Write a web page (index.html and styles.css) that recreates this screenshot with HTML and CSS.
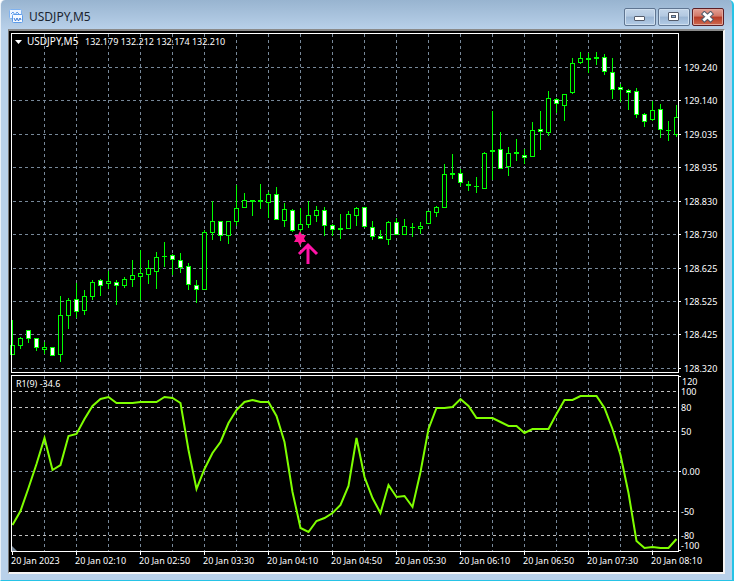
FILE: index.html
```html
<!DOCTYPE html>
<html lang="en">
<head>
  <meta charset="UTF-8">
  <meta name="viewport" content="width=device-width, initial-scale=1.0">
  <title>USDJPY,M5</title>
  <link rel="stylesheet" href="styles.css">
</head>
<body>
  <div class="window">
    <header class="titlebar">
      <svg class="app-icon" width="16" height="16" viewBox="0 0 16 16">
        <rect x="0.5" y="0.5" width="12" height="9" rx="1" fill="#eef5ff" stroke="#7fb2f0"/>
        <path d="M2 5l2-2 2 3 2-3 2 2" stroke="#5b9bea" fill="none"/>
        <rect x="3.5" y="5.5" width="10" height="8" rx="1" fill="#f6faff" stroke="#5b9bea"/>
        <path d="M5 9l1.500 3 1.500-3 1.500 3 1.500-3 1 2" stroke="#3c7bd6" fill="none"/>
      </svg>
      <h1 class="title">USDJPY,M5</h1>
      <div class="controls">
        <button class="control" aria-label="Minimize">
          <svg width="14" height="12" viewBox="0 0 14 12"><rect x="1.500" y="5.500" width="10" height="4" rx="0.500" fill="#fff" stroke="#555c6b"/></svg>
        </button>
        <button class="control" aria-label="Maximize">
          <svg width="14" height="12" viewBox="0 0 14 12">
            <rect x="1.500" y="1.500" width="10" height="8" rx="0.500" fill="#fff" stroke="#555c6b"/>
            <rect x="4.500" y="4.500" width="4" height="2" fill="#8fb4dc" stroke="#555c6b"/>
          </svg>
        </button>
        <button class="control close" aria-label="Close">
          <svg width="14" height="12" viewBox="0 0 14 12">
            <path d="M3.500 3l6 5.500M9.500 3l-6 5.500" stroke="#555c6b" stroke-width="5" stroke-linecap="square"/>
            <path d="M3.500 3l6 5.500M9.500 3l-6 5.500" stroke="#fff" stroke-width="3" stroke-linecap="square"/>
          </svg>
        </button>
      </div>
    </header>
    <main class="client">
      <svg class="chart" id="chart" viewBox="9 31 714 540">
        <g id="grid"></g>
        <g id="candles"></g>
        <polyline id="oscillator" class="oscillator"/>
        <g id="frames"></g>
        <g id="labels"></g>
        <path class="corner" d="M12 546l5 5h-5z"/>
        <path class="signal" d="M300 231l2 4h4l-2 3.500 2 3.500h-4l-2 4-2-4h-4l2-3.500-2-3.500h4z"/>
        <path class="arrow" d="M308 264v-19M299 254l9-9 9 9"/>
        <path class="marker" d="M15 40h7l-3.500 4z"/>
        <text class="label symbol" x="27" y="45">USDJPY,M5</text>
        <text class="label" x="85" y="45">132.179 132.212 132.174 132.210</text>
        <text class="label" x="16" y="387">R1(9) -34.6</text>
      </svg>
    </main>
  </div>
  <script src="chart.js"></script>
</body>
</html>
```

FILE: styles.css
```css
* { box-sizing: border-box; }
body { margin: 0; background: #fff; font-family: "Noto Sans", "Open Sans", sans-serif; }

.window {
  display: flex;
  flex-direction: column;
  min-height: 100vh;
  margin-right: 2px;
  padding: 0 7px 6px;
  background: linear-gradient(#98b4d0 0, #b9d1ea 30px, #b9d1ea 100%);
  border-left: 1px solid #e8f0f8;
  border-right: 2px solid #26c3e6;
  border-bottom: 1px solid #26c3e6;
  border-radius: 5px 5px 0 0;
}

.titlebar { display: flex; align-items: center; height: 29px; padding: 4px 1px 0 1px; }
.app-icon { margin-right: 4px; }
.title { flex: 1; margin: 0; font-size: 12px; line-height: 16px; font-weight: 400; color: #1b2430; }

.controls { display: flex; gap: 2px; }
.control {
  display: flex;
  align-items: center;
  justify-content: center;
  width: 32px;
  height: 18px;
  padding: 0;
  border: 1px solid #5f7591;
  border-radius: 2px;
  background: linear-gradient(#c3d5e9 0, #b3c9e1 45%, #9ab5d3 50%, #b4cce6 100%);
  box-shadow: inset 0 0 0 1px #cfdfef;
}
.close {
  border-color: #5c1f26;
  background: linear-gradient(#e3a196 0, #d27767 45%, #b63a26 50%, #cf6a50 100%);
  box-shadow: inset 0 0 0 1px #e2a89c;
}

.client {
  flex: 1;
  background: #000;
  border: 2px solid;
  border-color: #8a8a8a #f4f4f4 #f4f4f4 #777;
  border-left-width: 1px;
}
.chart { display: block; width: 100%; height: auto; }

.grid, .level { fill: none; stroke-dasharray: 3 3; shape-rendering: crispEdges; }
.grid { stroke: #778899; }
.level { stroke: #c0c0c0; }
.frame { fill: none; stroke: #fff; shape-rendering: crispEdges; }
.bull, .bear, .wick { stroke: #0f0; shape-rendering: crispEdges; }
.bull { fill: #000; }
.bear { fill: #fff; }
.oscillator { fill: none; stroke: #7fff00; stroke-width: 2; }
.label { fill: #fff; font-size: 9px; white-space: pre; }
.symbol { font-size: 10px; }
.corner { fill: #778899; }
.marker { fill: #fff; }
.signal { fill: #ff1493; }
.arrow { fill: none; stroke: #ff14a8; stroke-width: 3; }
```

FILE: chart.js
```javascript
const SVG_NS = "http://www.w3.org/2000/svg";
const STEP = 8;
const LEFT = 12;

// [high, bodyTop, bodyBottom, low, falling]
const bars = [
  [320,345,354,354], [337,338,345,348], [330,330,338,342,1], [338,338,347,350,1],
  [342,347,349,353], [347,347,355,355,1], [296,315,354,361], [298,300,315,328],
  [283,299,311,317,1], [290,296,310,314], [280,282,296,299], [279,280,285,295,1],
  [271,281,283,288], [280,282,285,304,1], [277,279,285,287], [260,275,279,286],
  [250,273,276,299], [260,268,274,283], [252,257,271,288], [242,256,256,266],
  [254,255,259,274,1], [253,260,267,272,1], [263,266,284,289,1], [280,285,289,302,1],
  [230,232,289,289], [201,221,232,239], [221,221,235,240,1], [221,221,235,243],
  [185,208,221,225], [193,200,207,207], [200,200,201,215], [184,200,201,208],
  [192,194,202,217], [187,194,219,219,1], [203,209,220,226], [209,210,230,231,1],
  [208,224,229,244], [201,215,224,227], [206,210,215,221], [207,210,225,235,1],
  [224,225,229,235,1], [214,228,229,238], [211,214,228,228], [207,208,215,225],
  [207,207,226,227,1], [221,227,236,239,1], [230,236,238,238,1], [221,222,239,244],
  [218,222,234,234,1], [219,226,234,234], [223,227,227,236], [222,226,228,233],
  [211,211,223,223], [206,207,212,216], [164,174,207,207], [154,173,174,178],
  [169,173,182,185,1], [181,184,185,190], [177,186,186,192], [152,153,188,188],
  [111,150,151,179], [132,149,168,168,1], [147,153,166,175], [139,152,153,160],
  [149,155,157,163,1], [122,130,156,156], [111,129,131,149,1], [91,98,132,135],
  [98,99,103,112,1], [94,94,105,120], [58,63,92,93], [52,58,62,63],
  [53,58,59,72], [52,57,58,64], [54,57,71,74,1], [58,72,89,98,1],
  [84,87,89,101,1], [89,90,92,109,1], [88,91,114,117,1], [113,114,121,126,1],
  [101,110,119,120], [104,109,129,137,1], [121,130,130,140], [105,117,134,136]
];

const oscillator = [
  524,510,487,463,437,469,464,435,433,418,405,398,396,402,402,402,401,401,401,396,
  397,402,449,488,468,452,441,422,409,401,399,401,401,415,441,491,527,531,520,517,
  512,504,485,437,476,497,512,484,496,495,506,471,428,407,407,406,398,405,417,417,
  417,421,425,425,432,428,428,428,413,399,399,395,395,395,407,428,454,492,540,547,
  546,547,547,538
];

const prices = [
  ["129.240",67], ["129.140",100], ["129.035",134], ["128.935",167], ["128.830",201],
  ["128.730",234], ["128.625",268], ["128.525",301], ["128.425",334], ["128.320",368]
];
const levels = [["100",391], ["80",407], ["50",431], ["-50",511], ["-80",535]];
const times = ["2023", "02:10", "02:50", "03:30", "04:10", "04:50", "05:30", "06:10", "06:50", "07:30", "08:10"];

function add(parent, tag, attrs, text) {
  const el = document.createElementNS(SVG_NS, tag);
  for (const name in attrs) el.setAttribute(name, attrs[name]);
  if (text) el.textContent = text;
  document.getElementById(parent).appendChild(el);
}

function line(parent, cls, x1, y1, x2, y2) {
  add(parent, "path", { class: cls, d: `M${x1} ${y1}L${x2} ${y2}` });
}

function label(x, y, text) {
  add("labels", "text", { class: "label", x, y }, text);
}

// grid
for (let x = 44; x < 678; x += 32) {
  line("grid", "grid", x + 0.5, 34, x + 0.5, 372);
  line("grid", "grid", x + 0.5, 376, x + 0.5, 551);
}
prices.forEach(([text, y]) => {
  line("grid", "grid", 13, y + 0.5, 678, y + 0.5);
  line("frames", "frame", 679, y + 0.5, 681, y + 0.5);
  label(684, y + 4, text);
});
line("grid", "grid", 13, 471.5, 678, 471.5);
levels.forEach(([text, y]) => {
  line("grid", "level", 13, y + 0.5, 678, y + 0.5);
  label(681, y + 4, text);
});
label(682, 385, "120");
label(682, 475, "0.00");
label(681, 549, "-100");

// candles
bars.forEach(([high, top, bottom, low, falling], i) => {
  const x = LEFT + i * STEP;
  line("candles", "wick", x + 0.5, high, x + 0.5, low + 1);
  if (top === bottom) {
    line("candles", "wick", x - 2, top + 0.5, x + 3, top + 0.5);
  } else {
    add("candles", "rect", {
      class: falling ? "bear" : "bull",
      x: x - 1.5, y: top + 0.5, width: 4, height: bottom - top
    });
  }
});

document.getElementById("oscillator").setAttribute(
  "points", oscillator.map((y, i) => `${LEFT + i * STEP + 0.5},${y + 1}`).join(" ")
);

// panel frames and time scale
add("frames", "rect", { class: "frame", x: 11.5, y: 33.5, width: 667, height: 339 });
add("frames", "rect", { class: "frame", x: 11.5, y: 375.5, width: 667, height: 176 });
[376, 471, 550].forEach(y => line("frames", "frame", 679, y + 0.5, 681, y + 0.5));
times.forEach((time, i) => {
  const x = LEFT + i * 64;
  line("frames", "frame", x + 0.5, 552, x + 0.5, 555);
  label(x - 1, 564, `20 Jan ${time}`);
});
```
